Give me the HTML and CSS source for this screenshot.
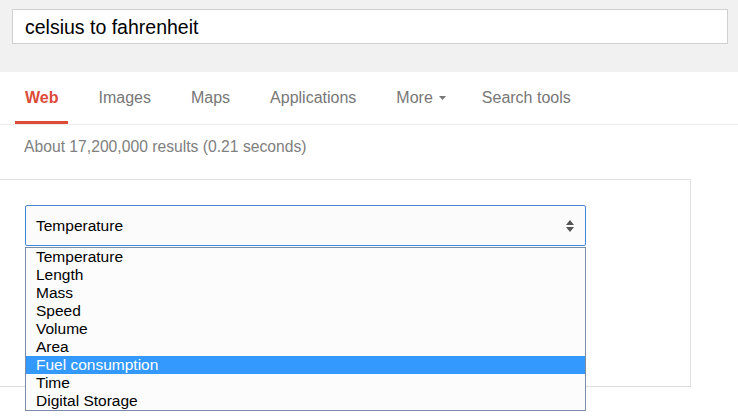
FILE: index.html
```html
<!DOCTYPE html>
<html>
<head>
<meta charset="utf-8">
<link rel="stylesheet" href="styles.css">
</head>
<body>
<header class="top">
  <div class="searchbox">celsius to fahrenheit</div>
</header>
<nav class="tabs">
  <span class="tab active">Web</span>
  <span class="tab">Images</span>
  <span class="tab">Maps</span>
  <span class="tab">Applications</span>
  <span class="tab more">More<svg class="caret" width="7" height="4" viewBox="0 0 7 4"><path d="M0 0H7L3.5 4Z" fill="#777"/></svg></span>
  <span class="tab">Search tools</span>
</nav>
<div class="stats">About 17,200,000 results (0.21 seconds)</div>
<section class="card">
  <div class="selectwrap">
    <div class="select">
      <span>Temperature</span>
      <svg class="updown" width="8" height="12" viewBox="0 0 8 12"><path d="M4 0L8 5H0Z M0 7H8L4 12Z" fill="#555"/></svg>
    </div>
    <ul class="options">
      <li>Temperature</li>
      <li>Length</li>
      <li>Mass</li>
      <li>Speed</li>
      <li>Volume</li>
      <li>Area</li>
      <li class="hl">Fuel consumption</li>
      <li>Time</li>
      <li>Digital Storage</li>
    </ul>
  </div>
</section>
</body>
</html>
```

FILE: styles.css
```css
html, body {
  margin: 0;
  padding: 0;
  background: #fff;
  font-family: "Liberation Sans", Arial, sans-serif;
}
html {
  min-height: 418px;
}
body {
  min-height: 418px;
}
.top {
  background: #f1f1f1;
  height: 72px;
  padding: 9px 10px 0 12px;
  box-sizing: border-box;
}
.searchbox {
  height: 35px;
  width: 716px;
  box-sizing: border-box;
  border: 1px solid #d0d0d0;
  background: #fff;
  font-size: 19.5px;
  line-height: 34px;
  padding-left: 12px;
  color: #000;
}
.tabs {
  display: flex;
  gap: 20px;
  padding-left: 15px;
  height: 52px;
  border-bottom: 1px solid #ebebeb;
}
.tab {
  padding: 2px 10px 0 10px;
  font-size: 16px;
  color: #777;
  display: flex;
  align-items: center;
  box-sizing: border-box;
  height: 52px;
  border-bottom: 3px solid transparent;
}
.tab.active {
  color: #dd4b39;
  font-weight: bold;
  border-bottom-color: #dd4b39;
}
.tab.more {
  padding-right: 6px;
}
.more .caret {
  margin-left: 6px;
  margin-top: 1px;
}
.stats {
  padding-left: 24px;
  font-size: 15.7px;
  color: #808080;
  height: 54px;
  line-height: 43px;
}
.card {
  width: 691px;
  height: 208px;
  box-sizing: border-box;
  border-top: 1px solid #e2e2e2;
  border-right: 1px solid #e2e2e2;
  border-bottom: 1px solid #dcdcdc;
  padding: 25px 0 0 25px;
}
.selectwrap {
  position: relative;
  width: 561px;
}
.select {
  height: 41px;
  box-sizing: border-box;
  border: 1px solid #4a86d8;
  border-radius: 2px;
  background: #fbfbfb;
  display: flex;
  align-items: center;
  justify-content: space-between;
  padding: 0 10px 0 10px;
  font-size: 15.5px;
  color: #000;
}
.updown {
  margin-right: 1px;
  margin-top: 1px;
}
.options {
  position: absolute;
  left: 0;
  top: 42px;
  width: 561px;
  box-sizing: border-box;
  margin: 0;
  padding: 0;
  list-style: none;
  border: 1px solid #7a8ca6;
  background: #fcfcfc;
}
.options li {
  height: 18px;
  line-height: 18px;
  padding-left: 10px;
  font-size: 15.5px;
  color: #000;
}
.options li.hl {
  background: #3399ff;
  color: #fff;
}
```
